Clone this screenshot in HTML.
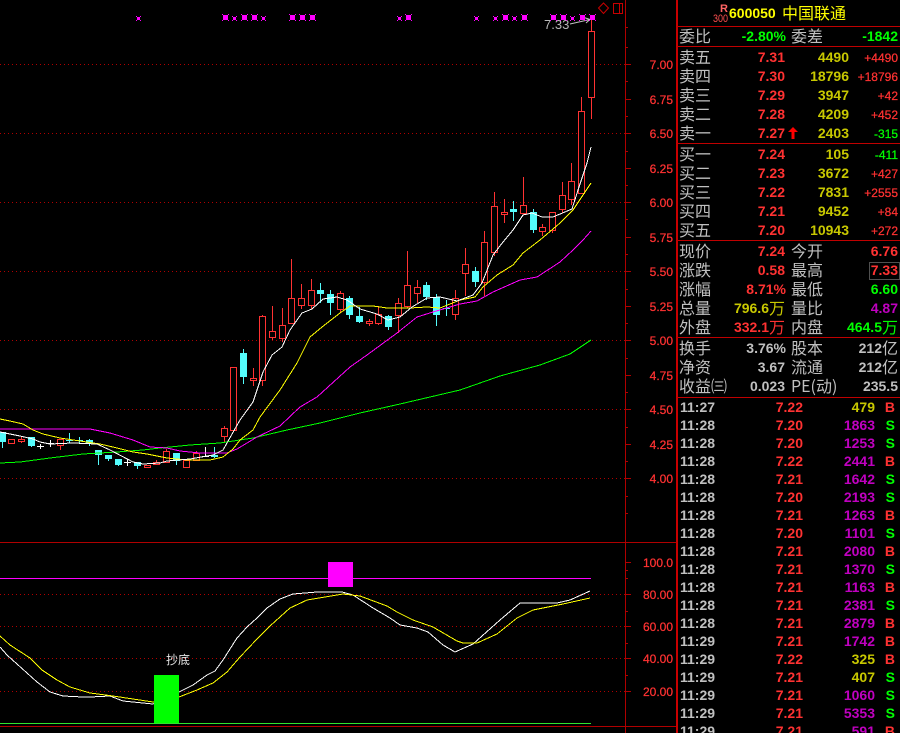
<!DOCTYPE html>
<html><head><meta charset="utf-8"><style>
html,body{margin:0;padding:0;background:#000;width:900px;height:733px;overflow:hidden}
svg{display:block}
text{font-family:"Liberation Sans","WenQuanYi Zen Hei",sans-serif}
.z{font:16px "WenQuanYi Zen Hei","Noto Sans CJK SC",sans-serif;fill:#c0c0c0;transform:translateY(-1px)}
.b{font:bold 14px "Liberation Sans","WenQuanYi Zen Hei",sans-serif;text-anchor:end}
.t{font:12px "Liberation Sans",sans-serif;text-anchor:end;stroke-width:.25px}
.t.r{stroke:#ff3232}.t.g{stroke:#0f0}
.a{font:12px "Liberation Sans",sans-serif;text-anchor:end;fill:#ff3232;stroke:#ff3232;stroke-width:.25px}
.r{fill:#ff3232}.y{fill:#c8c800}.g{fill:#0f0}.m{fill:#c000c0}.w{fill:#c0c0c0}
.s{font:bold 14px "Liberation Sans",sans-serif;fill:#c0c0c0}
.l{fill:none;shape-rendering:crispEdges}
.ll{fill:none;shape-rendering:crispEdges;stroke-width:1}
.d{stroke:#b00000;stroke-dasharray:1 3;shape-rendering:crispEdges;fill:none}
</style></head><body>
<svg width="900" height="733" viewBox="0 0 900 733" xmlns="http://www.w3.org/2000/svg">
<rect width="900" height="733" fill="#000"/>
<defs>
<path id="ms" d="M-2-2h1v1h-1zM2-2h1v1h-1zM-2 2h1v1h-1zM2 2h1v1h-1zM-1-1h3v3h-3z" fill="#f0f"/>
<path id="ml" d="M-3-3h1v1h-1zM3-3h1v1h-1zM-3 3h1v1h-1zM3 3h1v1h-1zM-2-2h5v5h-5z" fill="#f0f"/>
</defs>

<!-- grid -->
<path class="d" d="M0 64.5H625M0 133.5H625M0 202.5H625M0 271.5H625M0 340.5H625M0 409.5H625M0 478.5H625M0 594.5H625M0 626.5H625M0 658.5H625M0 691.5H625"/>
<!-- frame -->
<path class="l" stroke="#b00000" d="M625.5 0V733M0 542.5H677M0 726.5H677
M625 64.5h6M625 99.5h6M625 133.5h6M625 168.5h6M625 202.5h6M625 237.5h6M625 271.5h6M625 306.5h6M625 340.5h6M625 375.5h6M625 409.5h6M625 444.5h6M625 478.5h6
M625 27.5h3M625 47.5h3M625 81.5h3M625 116.5h3M625 151.5h3M625 185.5h3M625 219.5h3M625 254.5h3M625 289.5h3M625 323.5h3M625 358.5h3M625 392.5h3M625 427.5h3M625 461.5h3M625 496.5h3M625 513.5h3
M625 562.5h6M625 594.5h6M625 626.5h6M625 658.5h6M625 691.5h6M625 570.5h3M625 578.5h3M625 611.5h3M625 643.5h3M625 675.5h3"/>
<path class="l" stroke="#c80000" stroke-width="2" d="M677 0V733"/>
<path class="l" stroke="#c00000" d="M677 26.5H900M677 46.5H900M677 143.5H900M677 240.5H900M677 337.5H900M677 397.5H900"/>

<!-- red wicks -->
<path class="l" stroke="#ff3232" d="M591.5 19V119M581.5 97V193M571.5 163V205M562.5 182V213M552.5 212V233M542.5 224V236M523.5 177V215M504.5 199V223M494.5 192V256M484.5 231V296M465.5 248V296M455.5 290V320M417.5 280V303M407.5 251V308M398.5 298V333M378.5 306V325M369.5 319V326M340.5 291V313M311.5 279V309M301.5 284V309M291.5 259V324M282.5 308V342M272.5 306V340M262.5 315V386M253.5 368V386M233.5 367V430M224.5 426V442M196.5 451V460M186.5 460V467M166.5 449V462M156.5 460V465M147.5 465V468M60.5 439V450M21.5 437V443M11.5 439V443"/>
<!-- red bodies -->
<path class="l" stroke="#ff3232" style="fill:#000" d="M588.5 31.5h6v66h-6zM578.5 111.5h6v82h-6zM568.5 181.5h6v18h-6zM559.5 195.5h6v14h-6zM549.5 212.5h6v18h-6zM539.5 227.5h6v4h-6zM520.5 205.5h6v8h-6zM501.5 212.5h6v2h-6zM491.5 206.5h6v46h-6zM481.5 242.5h6v40h-6zM462.5 264.5h6v9h-6zM452.5 298.5h6v16h-6zM414.5 287.5h6v6h-6zM404.5 285.5h6v21h-6zM395.5 303.5h6v12h-6zM375.5 314.5h6v9h-6zM366.5 321.5h6v2h-6zM337.5 293.5h6v16h-6zM308.5 290.5h6v15h-6zM298.5 298.5h6v7h-6zM288.5 298.5h6v25h-6zM279.5 325.5h6v13h-6zM269.5 331.5h6v6h-6zM259.5 316.5h6v64h-6zM250.5 378.5h6v2h-6zM230.5 367.5h6v63h-6zM221.5 428.5h6v8h-6zM193.5 453.5h6v7h-6zM183.5 460.5h6v7h-6zM163.5 451.5h6v11h-6zM153.5 462.5h6v2h-6zM144.5 465.5h6v2h-6zM57.5 439.5h6v6h-6zM18.5 439.5h6v2h-6zM8.5 439.5h6v4h-6z"/>
<!-- cyan wicks -->
<path class="l" stroke="#54fcfc" d="M533.5 209V233M513.5 201V221M475.5 267V287M446.5 300V316M436.5 294V326M426.5 282V300M388.5 315V330M359.5 307V323M349.5 296V319M330.5 290V315M320.5 283V303M243.5 349V384M214.5 447V458M176.5 453V465M137.5 462V469M118.5 459V466M108.5 455V461M98.5 450V465M89.5 439V446M79.5 437V443M69.5 433V443M31.5 437V447M2.5 432V448"/>
<!-- cyan bodies -->
<path fill="#54fcfc" shape-rendering="crispEdges" d="M530 212h7v18h-7zM510 209h7v3h-7zM472 271h7v11h-7zM443 308h7v1h-7zM433 297h7v18h-7zM423 285h7v12h-7zM385 316h7v11h-7zM356 316h7v6h-7zM346 298h7v17h-7zM327 294h7v9h-7zM317 290h7v4h-7zM240 353h7v24h-7zM211 455h7v2h-7zM173 453h7v8h-7zM134 462h7v4h-7zM115 459h7v6h-7zM105 455h7v4h-7zM95 450h7v5h-7zM86 440h7v4h-7zM76 440h7v1h-7zM66 440h7v1h-7zM28 437h7v9h-7zM0 432h6v10h-6z"/>
<!-- white dojis -->
<path class="l" stroke="#fff" d="M124 462.5h7M127.5 459V466M47 443.5h7M50.5 440V447M37 446.5h7M40.5 444V449M202 456.5h7M205.5 447V457"/>

<!-- MAs -->
<polyline class="ll" stroke="#0f0" points="0,463 20,462 50,458 83,454 117,452 143,450 160,448 190,445 220,443 253,438 287,430 320,423 360,413 400,404 460,390 500,376 540,365 570,354 591,340"/>
<polyline class="ll" stroke="#f0f" points="0,429 90,429 110,433 133,440 150,447 167,448 180,451 200,453 227,453 237,449 257,437 280,426 300,407 317,397 350,367 367,355 397,333 417,317 433,312 460,304 477,301 493,292 520,280 537,277 560,262 573,250 583,240 591,231"/>
<polyline class="ll" stroke="#ff0" points="0,419 10,421 23,424 33,430 43,434 60,438 80,441 100,444 117,448 133,452 147,454 167,458 187,460 210,460 223,457 233,449 240,440 253,430 260,417 280,390 297,363 310,337 322,327 340,313 350,306 373,306 387,308 410,308 427,307 440,308 460,300 475,297 483,287 497,275 513,265 523,253 540,240 560,223 573,210 583,195 591,183"/>
<polyline class="ll" stroke="#fff" points="0,432 10,434 20,436 33,439 40,442 50,444 73,443 97,444 110,450 133,462 143,464 160,463 167,461 190,459 213,455 223,450 240,420 253,402 263,372 272,355 282,347 290,330 302,313 312,309 323,299 337,297 347,300 360,309 377,314 388,320 400,317 412,307 427,298 440,297 457,301 473,295 482,283 493,255 503,242 513,230 523,215 532,213 542,217 553,217 572,209 578,190 587,163 591,147"/>

<!-- arrow & 7.33 -->
<text x="544" y="29" fill="#b8b8b8" style="font:13px 'Liberation Sans',sans-serif">7.33</text>
<path fill="none" stroke="#c0c0c0" d="M570 24L590 19.5M584 17.5L590 19.5L586 23"/>
<!-- top marks -->
<use href="#ms" x="138" y="18"/><use href="#ml" x="225" y="17"/><use href="#ms" x="234" y="18"/><use href="#ml" x="244" y="17"/><use href="#ml" x="254" y="17"/><use href="#ms" x="263" y="18"/><use href="#ml" x="292" y="17"/><use href="#ml" x="302" y="17"/><use href="#ml" x="312" y="17"/><use href="#ms" x="399" y="18"/><use href="#ml" x="408" y="17"/><use href="#ms" x="476" y="18"/><use href="#ms" x="495" y="18"/><use href="#ml" x="505" y="17"/><use href="#ms" x="514" y="18"/><use href="#ml" x="524" y="17"/><use href="#ml" x="553" y="17"/><use href="#ml" x="563" y="17"/><use href="#ms" x="572" y="18"/><use href="#ml" x="582" y="17"/><use href="#ml" x="592" y="17"/>
<!-- diamond and box -->
<path fill="none" stroke="#c80000" d="M603.5 3L608.5 8L603.5 13.5L598.5 8Z"/>
<path class="l" stroke="#c80000" d="M613.5 3.5h9v10h-9zM619.5 3.5v10"/>

<!-- axis labels -->
<text class="a" x="673" y="69">7.00</text><text class="a" x="673" y="104">6.75</text><text class="a" x="673" y="138">6.50</text><text class="a" x="673" y="173">6.25</text><text class="a" x="673" y="207">6.00</text><text class="a" x="673" y="242">5.75</text><text class="a" x="673" y="276">5.50</text><text class="a" x="673" y="311">5.25</text><text class="a" x="673" y="345">5.00</text><text class="a" x="673" y="380">4.75</text><text class="a" x="673" y="414">4.50</text><text class="a" x="673" y="449">4.25</text><text class="a" x="673" y="483">4.00</text>
<text class="a" x="673" y="567">100.0</text><text class="a" x="673" y="599">80.00</text><text class="a" x="673" y="631">60.00</text><text class="a" x="673" y="663">40.00</text><text class="a" x="673" y="696">20.00</text>

<!-- lower indicator -->
<path class="l" stroke="#f0f" d="M0 578.5H591"/>
<path class="l" stroke="#2ee62e" d="M0 723.5H591"/>
<polyline class="ll" stroke="#fff" points="0,647 7,655 17,664 27,673 37,682 50,692 63,696 83,697 90,697 110,696 123,701 153,704 179,692 193,685 207,675 215,671 223,660 237,638 247,627 257,618 267,608 280,599 293,594 317,592 342,592 353,595 373,608 390,618 400,625 417,628 428,632 443,645 455,652 473,644 500,620 520,603 537,603 557,603 570,600 590,591"/>
<polyline class="ll" stroke="#ff0" points="0,636 10,645 30,658 42,670 57,680 70,687 90,693 113,696 133,699 153,702 179,697 197,690 213,683 227,672 240,657 257,639 270,626 290,608 307,600 343,594 360,596 387,606 397,612 413,620 433,627 457,641 463,643 477,643 497,634 517,618 533,610 563,604 590,598"/>
<rect x="154" y="675" width="25" height="48" fill="#0f0"/>
<rect x="328" y="562" width="25" height="25" fill="#f0f"/>
<text x="166" y="664" style="font:12px 'WenQuanYi Zen Hei','Noto Sans CJK SC',sans-serif" fill="#e6e6e6">抄底</text>

<!-- header -->
<text x="720" y="12" style="font:bold 11px 'Liberation Sans',sans-serif" fill="#ff6464">R</text>
<text x="713" y="22" textLength="15" lengthAdjust="spacingAndGlyphs" style="font:11px 'Liberation Sans',sans-serif" fill="#ff5050">300</text>
<text x="729" y="18" style="font:bold 14px 'Liberation Sans',sans-serif" fill="#ff0">600050</text>
<text x="782" y="20" class="z" style="fill:#ff0">中国联通</text>

<!-- commission -->
<text class="z" x="679" y="43">委比</text><text class="b g" x="786" y="41">-2.80%</text><text class="z" x="791" y="43">委差</text><text class="b g" x="898" y="41">-1842</text>

<text class="z" x="679" y="64">卖五</text><text class="b r" x="785" y="62">7.31</text><text class="b y" x="849" y="62">4490</text><text class="t r" x="898" y="62">+4490</text>
<text class="z" x="679" y="83">卖四</text><text class="b r" x="785" y="81">7.30</text><text class="b y" x="849" y="81">18796</text><text class="t r" x="898" y="81">+18796</text>
<text class="z" x="679" y="102">卖三</text><text class="b r" x="785" y="100">7.29</text><text class="b y" x="849" y="100">3947</text><text class="t r" x="898" y="100">+42</text>
<text class="z" x="679" y="121">卖二</text><text class="b r" x="785" y="119">7.28</text><text class="b y" x="849" y="119">4209</text><text class="t r" x="898" y="119">+452</text>
<text class="z" x="679" y="140">卖一</text><text class="b r" x="785" y="138">7.27</text><path fill="#f00" d="M793 127l-5 5h3.500v7h3v-7h3.500z"/><text class="b y" x="849" y="138">2403</text><text class="t g" x="898" y="138">-315</text>

<text class="z" x="679" y="161">买一</text><text class="b r" x="785" y="159">7.24</text><text class="b y" x="849" y="159">105</text><text class="t g" x="898" y="159">-411</text>
<text class="z" x="679" y="180">买二</text><text class="b r" x="785" y="178">7.23</text><text class="b y" x="849" y="178">3672</text><text class="t r" x="898" y="178">+427</text>
<text class="z" x="679" y="199">买三</text><text class="b r" x="785" y="197">7.22</text><text class="b y" x="849" y="197">7831</text><text class="t r" x="898" y="197">+2555</text>
<text class="z" x="679" y="218">买四</text><text class="b r" x="785" y="216">7.21</text><text class="b y" x="849" y="216">9452</text><text class="t r" x="898" y="216">+84</text>
<text class="z" x="679" y="237">买五</text><text class="b r" x="785" y="235">7.20</text><text class="b y" x="849" y="235">10943</text><text class="t r" x="898" y="235">+272</text>

<!-- quote -->
<rect x="869.500" y="262.500" width="30" height="17" fill="none" stroke="#505050" shape-rendering="crispEdges"/>
<text class="z" x="679" y="258">现价</text><text class="b r" x="785" y="256">7.24</text><text class="z" x="791" y="258">今开</text><text class="b r" x="898" y="256">6.76</text>
<text class="z" x="679" y="277">涨跌</text><text class="b r" x="785" y="275">0.58</text><text class="z" x="791" y="277">最高</text><text class="b r" x="898" y="275">7.33</text>
<text class="z" x="679" y="296">涨幅</text><text class="b r" x="786" y="294">8.71%</text><text class="z" x="791" y="296">最低</text><text class="b g" x="898" y="294">6.60</text>
<text class="z" x="679" y="315">总量</text><text class="b y" x="769" y="313">796.6</text><text class="z" x="769" y="315" style="fill:#c8c800">万</text><text class="z" x="791" y="315">量比</text><text class="b m" x="898" y="313">4.87</text>
<text class="z" x="679" y="334">外盘</text><text class="b r" x="769" y="332">332.1</text><text class="z" x="769" y="334" style="fill:#ff3232">万</text><text class="z" x="791" y="334">内盘</text><text class="b g" x="882" y="332">464.5</text><text class="z" x="882" y="334" style="fill:#0f0">万</text>

<text class="z" x="679" y="355">换手</text><text class="b w" x="786" y="353">3.76%</text><text class="z" x="791" y="355">股本</text><text class="b w" x="882" y="353">212</text><text class="z" x="882" y="355">亿</text>
<text class="z" x="679" y="374">净资</text><text class="b w" x="785" y="372">3.67</text><text class="z" x="791" y="374">流通</text><text class="b w" x="882" y="372">212</text><text class="z" x="882" y="374">亿</text>
<text class="z" x="679" y="393">收益㈢</text><text class="b w" x="785" y="391">0.023</text><text class="z" x="791" y="393">PE(动)</text><text class="b w" x="898" y="391">235.5</text>

<!-- ticks -->
<text class="s" x="680" y="412">11:27</text><text class="b r" x="803" y="412">7.22</text><text class="b y" x="875" y="412">479</text><text class="b r" x="895" y="412">B</text>
<text class="s" x="680" y="430">11:28</text><text class="b r" x="803" y="430">7.20</text><text class="b m" x="875" y="430">1863</text><text class="b g" x="895" y="430">S</text>
<text class="s" x="680" y="448">11:28</text><text class="b r" x="803" y="448">7.20</text><text class="b m" x="875" y="448">1253</text><text class="b g" x="895" y="448">S</text>
<text class="s" x="680" y="466">11:28</text><text class="b r" x="803" y="466">7.22</text><text class="b m" x="875" y="466">2441</text><text class="b r" x="895" y="466">B</text>
<text class="s" x="680" y="484">11:28</text><text class="b r" x="803" y="484">7.21</text><text class="b m" x="875" y="484">1642</text><text class="b g" x="895" y="484">S</text>
<text class="s" x="680" y="502">11:28</text><text class="b r" x="803" y="502">7.20</text><text class="b m" x="875" y="502">2193</text><text class="b g" x="895" y="502">S</text>
<text class="s" x="680" y="520">11:28</text><text class="b r" x="803" y="520">7.21</text><text class="b m" x="875" y="520">1263</text><text class="b r" x="895" y="520">B</text>
<text class="s" x="680" y="538">11:28</text><text class="b r" x="803" y="538">7.20</text><text class="b m" x="875" y="538">1101</text><text class="b g" x="895" y="538">S</text>
<text class="s" x="680" y="556">11:28</text><text class="b r" x="803" y="556">7.21</text><text class="b m" x="875" y="556">2080</text><text class="b r" x="895" y="556">B</text>
<text class="s" x="680" y="574">11:28</text><text class="b r" x="803" y="574">7.21</text><text class="b m" x="875" y="574">1370</text><text class="b g" x="895" y="574">S</text>
<text class="s" x="680" y="592">11:28</text><text class="b r" x="803" y="592">7.21</text><text class="b m" x="875" y="592">1163</text><text class="b r" x="895" y="592">B</text>
<text class="s" x="680" y="610">11:28</text><text class="b r" x="803" y="610">7.21</text><text class="b m" x="875" y="610">2381</text><text class="b g" x="895" y="610">S</text>
<text class="s" x="680" y="628">11:28</text><text class="b r" x="803" y="628">7.21</text><text class="b m" x="875" y="628">2879</text><text class="b r" x="895" y="628">B</text>
<text class="s" x="680" y="646">11:29</text><text class="b r" x="803" y="646">7.21</text><text class="b m" x="875" y="646">1742</text><text class="b r" x="895" y="646">B</text>
<text class="s" x="680" y="664">11:29</text><text class="b r" x="803" y="664">7.22</text><text class="b y" x="875" y="664">325</text><text class="b r" x="895" y="664">B</text>
<text class="s" x="680" y="682">11:29</text><text class="b r" x="803" y="682">7.21</text><text class="b y" x="875" y="682">407</text><text class="b g" x="895" y="682">S</text>
<text class="s" x="680" y="700">11:29</text><text class="b r" x="803" y="700">7.21</text><text class="b m" x="875" y="700">1060</text><text class="b g" x="895" y="700">S</text>
<text class="s" x="680" y="718">11:29</text><text class="b r" x="803" y="718">7.21</text><text class="b m" x="875" y="718">5353</text><text class="b g" x="895" y="718">S</text>
<text class="s" x="680" y="736">11:29</text><text class="b r" x="803" y="736">7.21</text><text class="b m" x="875" y="736">591</text><text class="b r" x="895" y="736">B</text>
</svg>
</body></html>
